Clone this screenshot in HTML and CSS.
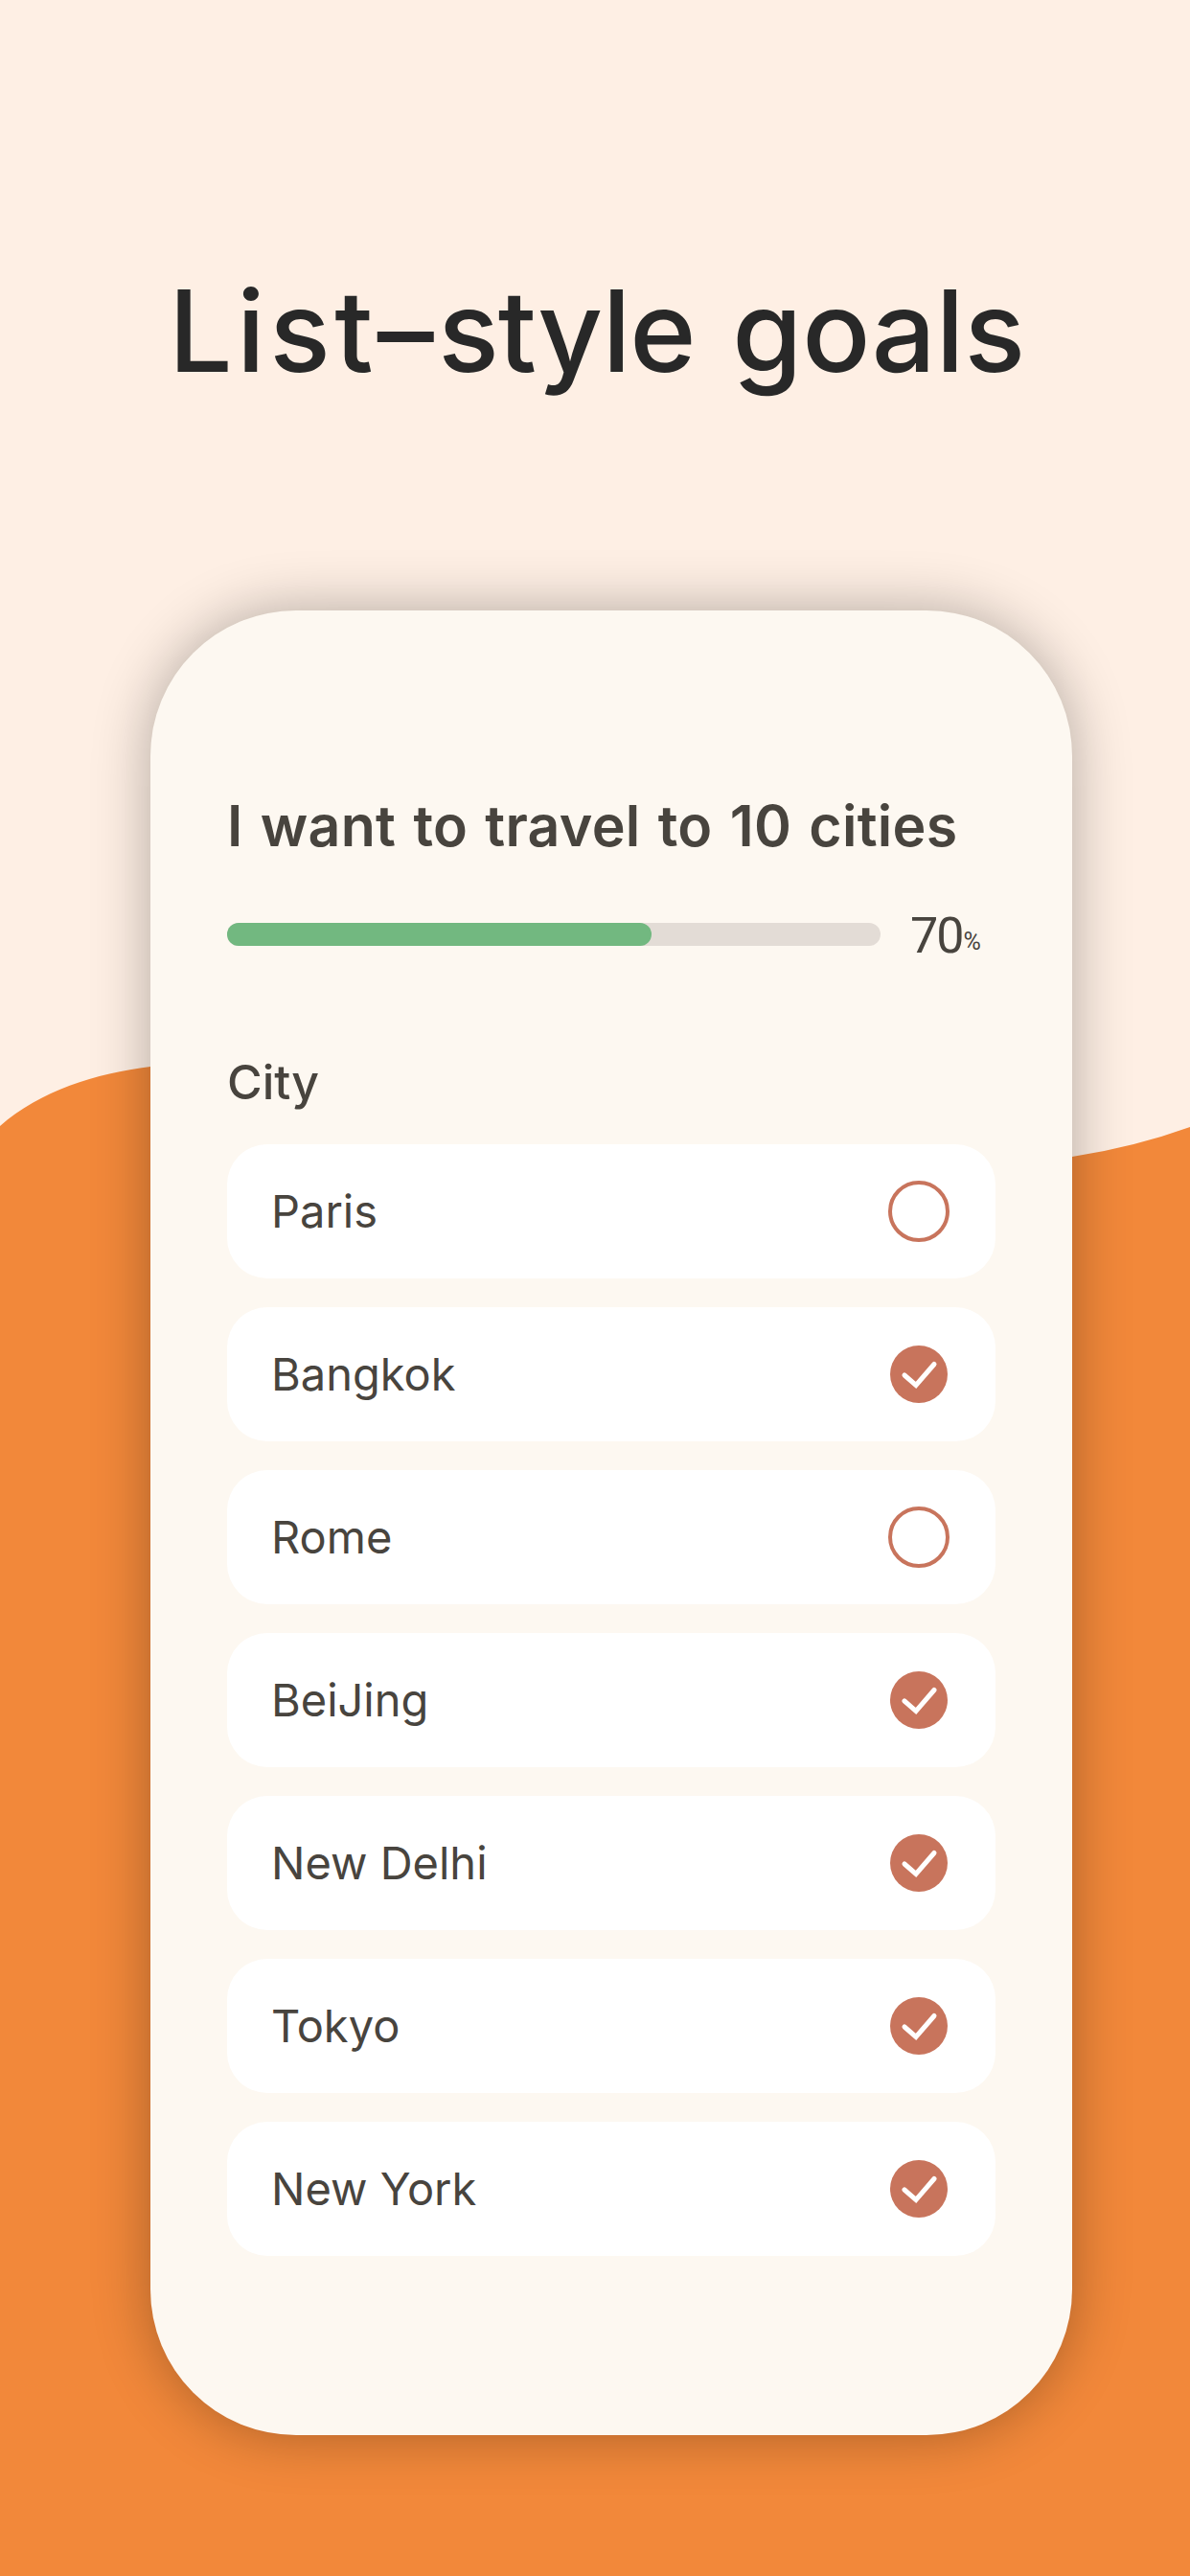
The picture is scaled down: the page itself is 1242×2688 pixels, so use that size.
FILE: index.html
```html
<!DOCTYPE html>
<html lang="en">
<head>
    <meta charset="UTF-8">
    <meta name="viewport" content="width=device-width, initial-scale=1.0">
    <title>List-style goals</title>
    <link rel="stylesheet" href="styles.css">
</head>
<body>
    <!-- orange wave behind the card -->
    <svg class="wave" viewBox="0 0 1242 2688" aria-hidden="true">
        <path d="M0 1175 C42 1138 100 1120 157 1113 C480 1072 790 1262 1119 1207 Q1184 1197 1242 1176 V2688 H0 Z"/>
    </svg>

    <h1 class="title"><span class="wide">List–</span><span class="tight">style</span> goals</h1>

    <main class="card">
        <h2 class="goal">I want to travel to 10 cities</h2>
        <div class="progress">
            <div class="bar"><div class="bar-fill"></div></div>
            <div class="percent">70<span class="percent-sign">%</span></div>
        </div>

        <h3 class="list-title">City</h3>
        <ul class="list">
            <li class="list-item"><span class="name">Paris</span><span class="circle"></span></li>
            <li class="list-item"><span class="name">Bangkok</span><svg class="check" viewBox="0 0 60 60"><circle cx="30" cy="30" r="30"/><path d="M15 31 L27 41.5 L46 19.5"/></svg></li>
            <li class="list-item"><span class="name">Rome</span><span class="circle"></span></li>
            <li class="list-item"><span class="name">BeiJing</span><svg class="check" viewBox="0 0 60 60"><circle cx="30" cy="30" r="30"/><path d="M15 31 L27 41.5 L46 19.5"/></svg></li>
            <li class="list-item"><span class="name">New Delhi</span><svg class="check" viewBox="0 0 60 60"><circle cx="30" cy="30" r="30"/><path d="M15 31 L27 41.5 L46 19.5"/></svg></li>
            <li class="list-item"><span class="name">Tokyo</span><svg class="check" viewBox="0 0 60 60"><circle cx="30" cy="30" r="30"/><path d="M15 31 L27 41.5 L46 19.5"/></svg></li>
            <li class="list-item"><span class="name">New York</span><svg class="check" viewBox="0 0 60 60"><circle cx="30" cy="30" r="30"/><path d="M15 31 L27 41.5 L46 19.5"/></svg></li>
        </ul>
    </main>
</body>
</html>
```
FILE: styles.css
```css
* {
    box-sizing: border-box;
}
body {
    margin: 0;
    height: 2688px;
    overflow: hidden;
    position: relative;
    font-family: Inter, Roboto, sans-serif;
    background-color: #feefe4;
    color: #48443e;
}
h1, h2, h3, ul {
    margin: 0;
    padding: 0;
}
.wave {
    position: absolute;
    top: 0;
    left: 0;
    width: 1242px;
    height: 2688px;
    z-index: -1;
    fill: #f2883a;
}
.title {
    height: 637px;
    padding: 265px 0 0 176px;
    font-size: 118px;
    line-height: 160px;
    font-weight: 500;
    word-spacing: 7px;
    color: #282828;
    white-space: nowrap;
}
.wide {
    letter-spacing: 4.4px;
}
.tight {
    letter-spacing: -1px;
}
.card {
    width: 962px;
    height: 1904px;
    margin-left: 157px;
    padding: 184px 80px 0;
    border-radius: 152px;
    background-color: #fdf8f1;
    box-shadow: 0 0 60px rgba(0, 0, 0, 0.3);
}
.goal {
    font-size: 59px;
    line-height: 82px;
    font-weight: 600;
    letter-spacing: 0.3px;
    word-spacing: 3px;
    white-space: nowrap;
}
.progress {
    display: flex;
    align-items: center;
    height: 70px;
    margin-top: 37px;
}
.bar {
    width: 682px;
    height: 24px;
    border-radius: 12px;
    background-color: #e3dcd6;
}
.bar-fill {
    width: 443px;
    height: 24px;
    border-radius: 12px;
    background-color: #72b880;
}
.percent {
    margin-left: 31px;
    padding-top: 4px;
    font-family: Roboto, sans-serif;
    font-size: 52px;
    line-height: 70px;
    font-weight: 400;
    letter-spacing: -2px;
    white-space: nowrap;
}
.percent-sign {
    margin-left: 1px;
    font-size: 25px;
    vertical-align: 3px;
    line-height: 1;
}
.list-title {
    margin-top: 70px;
    margin-bottom: 16px;
    font-size: 50px;
    line-height: 98px;
    font-weight: 500;
}
.list {
    display: flex;
    flex-direction: column;
    gap: 30px;
    list-style: none;
}
.list-item {
    display: flex;
    align-items: center;
    justify-content: space-between;
    height: 140px;
    padding: 0 48px 0 46px;
    border-radius: 42px;
    background-color: #fff;
}
.name {
    font-size: 47px;
    line-height: 60px;
    font-weight: 400;
}
.circle {
    width: 64px;
    height: 64px;
    border: 4px solid #c8745c;
    border-radius: 50%;
}
.check {
    width: 60px;
    height: 60px;
    margin-right: 2px;
    fill: #c8745c;
}
.check path {
    fill: none;
    stroke: #fff;
    stroke-width: 5;
    stroke-linecap: round;
}
```
